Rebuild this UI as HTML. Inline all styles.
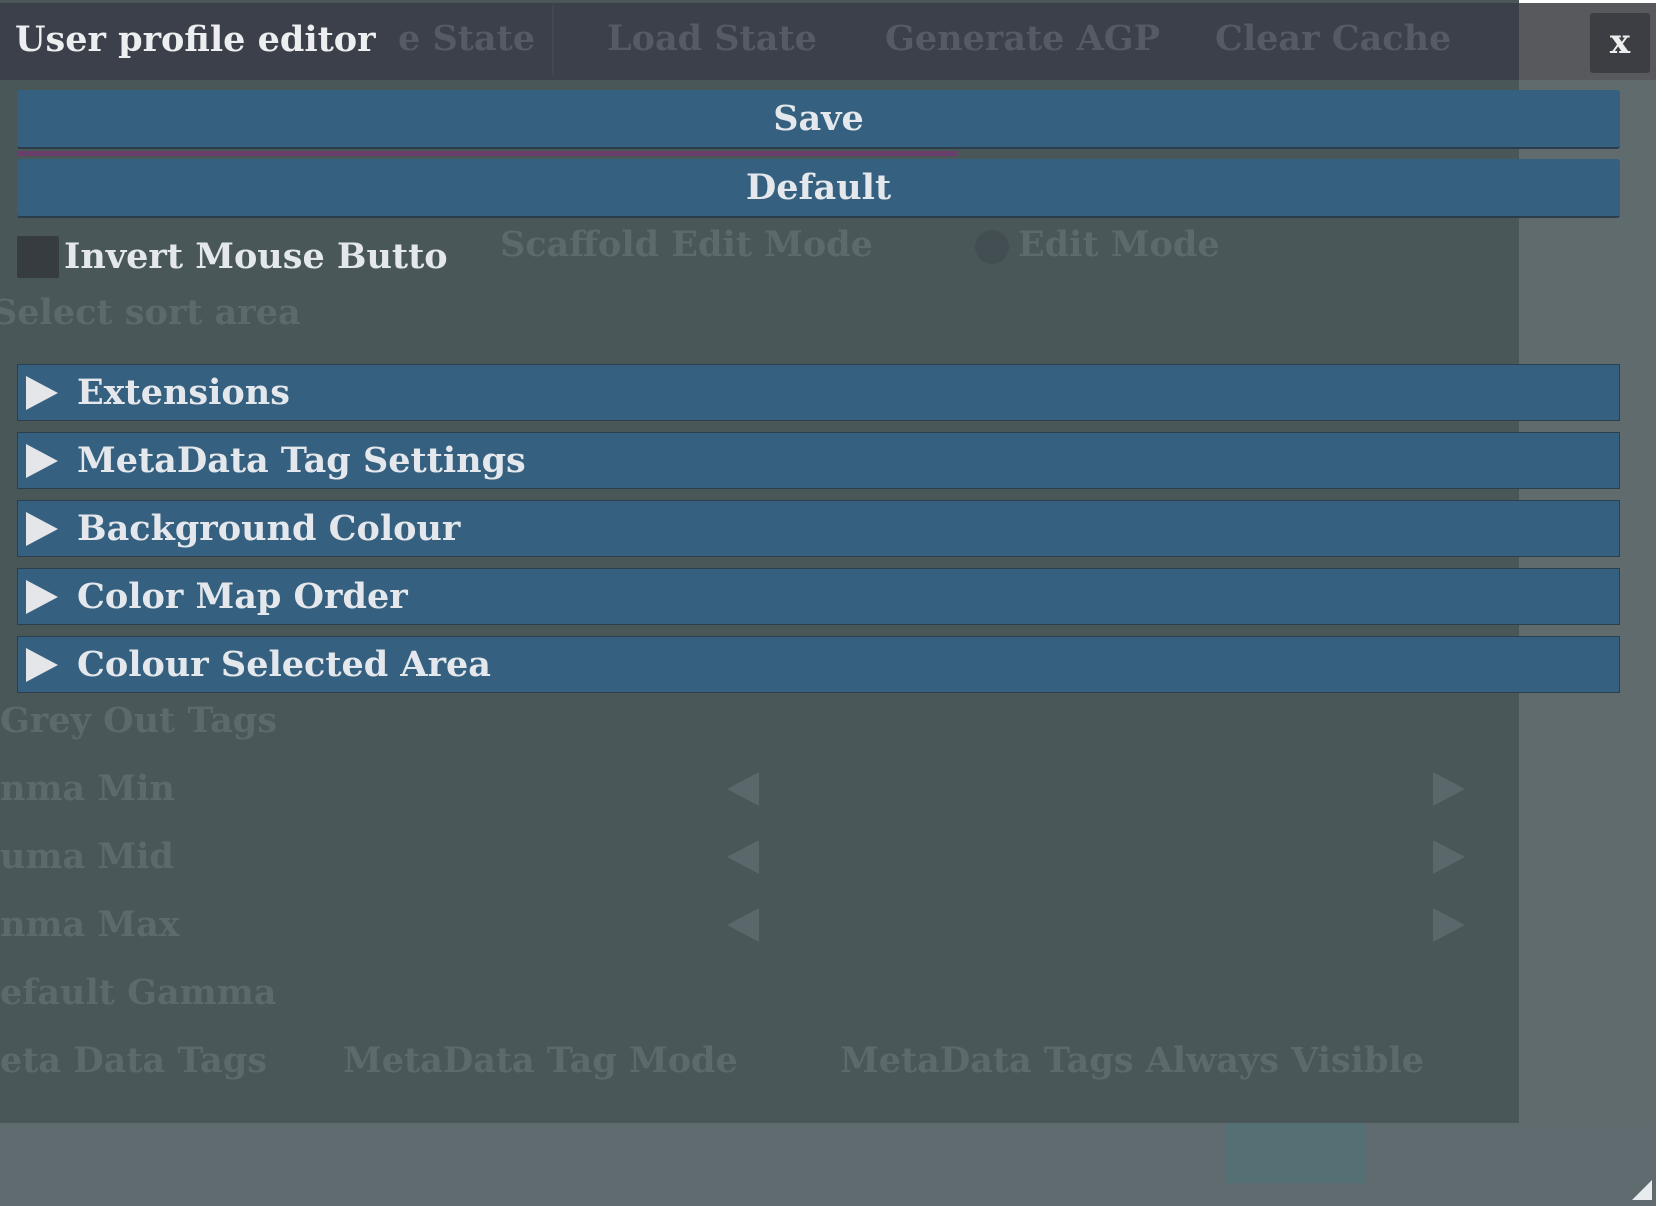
<!DOCTYPE html>
<html><head><meta charset="utf-8"><style>
*{margin:0;padding:0;box-sizing:border-box}
body{width:1662px;height:1206px;overflow:hidden;background:#5f6a6d;position:relative;font-family:"DejaVu Serif","Liberation Serif",serif;font-weight:bold;color:#e4e8ec}
.abs{position:absolute;white-space:nowrap}
.panel{left:0;top:0;width:1519px;height:1123px;background:#4a5759}
.title{left:0;top:3px;width:1519px;height:77px;background:#3b404b}
.rtitle{left:1519px;top:3px;width:137px;height:77px;background:#58595c}
.rstrip{left:1519px;top:80px;width:137px;height:1043px;background:#606b6e}
.topw{left:1519px;top:0;width:143px;height:3px;background:#fff}
.redge{left:1656px;top:0;width:6px;height:1206px;background:#fff}
.close{left:1590px;top:13px;width:60px;height:60px;background:#3d3e44;border-radius:3px;font-size:34px;text-align:center;line-height:58px;color:#eee}
.btn{left:17px;width:1603px;height:59px;background:#35607f;border-radius:3px;border-bottom:2px solid #2a3d4c;font-size:35px;text-align:center;line-height:57px}
.hdr{left:17px;width:1603px;height:57px;background:#35607f;border:1px solid #2c3f4d;font-size:35px;line-height:55px;padding-left:59px}
.tri{position:absolute;left:8px;top:11px;width:0;height:0;border-top:17px solid transparent;border-bottom:17px solid transparent;border-left:32px solid #e4e6ea}
.ghost{color:#5d696c;font-size:35px}
.ghostd{color:#545b63;font-size:35px}
</style></head><body>
<div class="abs panel"></div>
<div class="abs title"></div>
<div class="abs rtitle"></div>
<div class="abs rstrip"></div>
<div class="abs topw"></div>
<div class="abs redge"></div>
<div class="abs" style="left:0;top:1123px;width:1656px;height:83px;background:#5f6b6e"></div>
<div class="abs" style="left:1225px;top:1123px;width:140px;height:60px;background:#557075"></div>

<div class="abs ghostd" style="left:398px;top:18px">e State</div>
<div class="abs" style="left:552px;top:5px;width:2px;height:70px;background:#434852"></div>
<div class="abs ghostd" style="left:607px;top:18px">Load State</div>
<div class="abs ghostd" style="left:885px;top:18px">Generate AGP</div>
<div class="abs ghostd" style="left:1215px;top:18px">Clear Cache</div>
<div class="abs" style="left:15px;top:19px;font-size:35px;color:#eceef0">User profile editor</div>
<div class="abs close">x</div>

<div class="abs btn" style="top:90px">Save</div>
<div class="abs" style="left:17px;top:151px;width:940px;height:5px;background:#6a3e6a"></div>
<div class="abs btn" style="top:159px">Default</div>

<div class="abs ghost" style="left:500px;top:224px">Scaffold Edit Mode</div>
<div class="abs" style="left:975px;top:230px;width:34px;height:34px;border-radius:50%;background:#434e52"></div>
<div class="abs ghost" style="left:1018px;top:224px">Edit Mode</div>
<div class="abs" style="left:17px;top:236px;width:42px;height:42px;background:#363c40;border-radius:2px"></div>
<div class="abs" style="left:64px;top:236px;font-size:35px">Invert Mouse Butto</div>
<div class="abs ghost" style="left:-8px;top:292px">Select sort area</div>

<div class="abs hdr" style="top:364px"><span class="tri"></span>Extensions</div>
<div class="abs hdr" style="top:432px"><span class="tri"></span>MetaData Tag Settings</div>
<div class="abs hdr" style="top:500px"><span class="tri"></span>Background Colour</div>
<div class="abs hdr" style="top:568px"><span class="tri"></span>Color Map Order</div>
<div class="abs hdr" style="top:636px"><span class="tri"></span>Colour Selected Area</div>

<div class="abs ghost" style="left:0;top:700px">Grey Out Tags</div>
<div class="abs ghost" style="left:0;top:768px">nma Min</div>
<div class="abs ghost" style="left:0;top:836px">uma Mid</div>
<div class="abs ghost" style="left:0;top:904px">nma Max</div>
<div class="abs ghost" style="left:0;top:972px">efault Gamma</div>
<div class="abs ghost" style="left:0;top:1040px">eta Data Tags</div>
<div class="abs ghost" style="left:343px;top:1040px">MetaData Tag Mode</div>
<div class="abs ghost" style="left:840px;top:1040px">MetaData Tags Always Visible</div>
<div class="abs" style="left:727px;top:772px;border-top:17px solid transparent;border-bottom:17px solid transparent;border-right:32px solid #5a676b"></div>
<div class="abs" style="left:1433px;top:772px;border-top:17px solid transparent;border-bottom:17px solid transparent;border-left:32px solid #5a676b"></div>
<div class="abs" style="left:727px;top:840px;border-top:17px solid transparent;border-bottom:17px solid transparent;border-right:32px solid #5a676b"></div>
<div class="abs" style="left:1433px;top:840px;border-top:17px solid transparent;border-bottom:17px solid transparent;border-left:32px solid #5a676b"></div>
<div class="abs" style="left:727px;top:908px;border-top:17px solid transparent;border-bottom:17px solid transparent;border-right:32px solid #5a676b"></div>
<div class="abs" style="left:1433px;top:908px;border-top:17px solid transparent;border-bottom:17px solid transparent;border-left:32px solid #5a676b"></div>
<div class="abs" style="left:1632px;top:1180px;border-left:20px solid transparent;border-bottom:20px solid #e8ecee"></div>
</body></html>
